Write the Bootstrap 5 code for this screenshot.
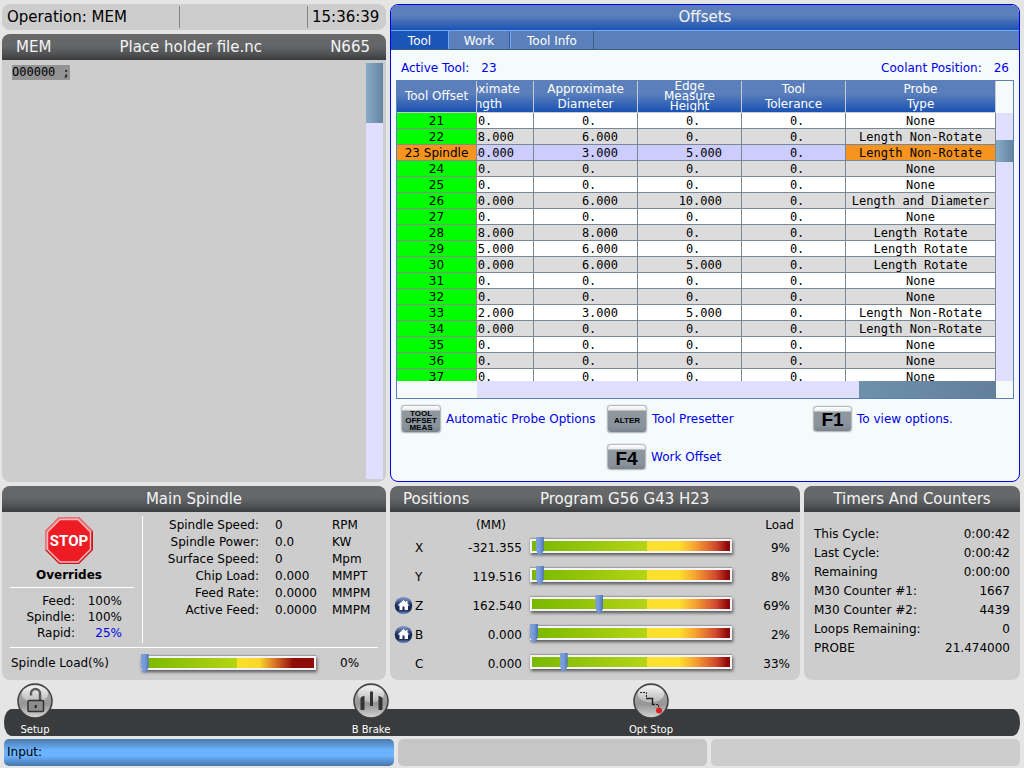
<!DOCTYPE html>
<html lang="en">
<head>
<meta charset="utf-8">
<meta name="viewport" content="width=device-width, initial-scale=1">
<title>CNC Control - Offsets</title>
<link href="https://cdn.jsdelivr.net/npm/bootstrap@5.3.0/dist/css/bootstrap.min.css" rel="stylesheet">
<style>
  body { font-family: "DejaVu Sans", sans-serif; font-size: 12px; line-height: 16px; color: #000; background: #e5e5e5; }
  .screen { height: 100vh; min-height: 700px; padding: 4px 4px 3px 2px; }
  .top-area { display: grid; grid-template-columns: 384fr 630fr; gap: 4px; min-height: 0; }
  .bottom-area { display: grid; grid-template-columns: 384fr 410fr 216fr; gap: 4px; height: 194px; margin-top: 4px; }
  .pane { background: #cdcdcd; border-radius: 8px; overflow: hidden; min-width: 0; }
  .pane-title, .blue-title, .op-bar { font-size: 15px; font-weight: 400; }
  .pane-title { height: 26px; line-height: 26px; color: #f4f4f4; margin: 0; background: linear-gradient(#66686a 0%, #646668 45%, #515355 75%, #393b3c 100%); }
  .file-title { padding: 0 16px 0 14px; }
  .op-bar { height: 26px; }
  .op-bar > div { border-right: 1px solid #858585; margin: 2px 0; line-height: 22px; }
  .op-bar > div:last-child { border: 0; }
  .op-mode { width: 178px; padding-left: 5px; }
  .op-time { width: 78px; padding-left: 4px; }
  .code-line { font-family: "DejaVu Sans Mono", monospace; background: #939393; line-height: 15px; margin: 5px 0 0 10px; height: 15px; }
  .v-track { width: 17px; margin: 3px 3px 3px 0; background: #e0dfff; }
  .v-thumb { height: 60px; background: linear-gradient(90deg, #86adc6, #6583a0); }

  .offsets { background: #f5fbfb; border: 1px solid #0000e6; border-radius: 8px; overflow: hidden; min-width: 0; }
  .blue-title { height: 26px; margin: -1px -1px 0; line-height: 26px; color: #f4f4f4; background: linear-gradient(#5b7fbb 0%, #5b7fbb 45%, #1a52b4 100%); }
  .tab-row { height: 20px; background: #5b7fbb; border-top: 1px solid #6cacff; border-bottom: 1px solid #3c5c84; }
  .tab-btn { border: 0; height: 18px; padding: 3px 0 0; line-height: 15px; color: #fff; background: #5b7fbb; border-right: 1px solid #3c5c84; border-left: 1px solid #6cacff; }
  .tab-btn.on { background: #1a55b8; border-color: #1a55b8; }
  .t1 { width: 57px; } .t2 { width: 62px; } .t3 { width: 84px; }
  .blue-text { color: #0000e8; }
  .info-row { padding: 10px 10px 0; height: 30px; }
  .grid-frame { margin: 0 5px; border: 1px solid #5b7fbb; display: grid; grid-template-columns: minmax(0, 1fr) 17px; grid-template-rows: minmax(0, 1fr) 17px; min-height: 0; }
  .table-view { overflow: auto; scrollbar-width: none; }
  .table-view::-webkit-scrollbar { display: none; }
  .offset-table { border-collapse: separate; border-spacing: 0; table-layout: fixed; min-width: 646px; width: 100%; font-family: "DejaVu Sans Mono", monospace; }
  .offset-table th, .offset-table td { padding: 1px 0 0; border-right: 1px solid #7a8794; border-bottom: 1px solid #7a8794; height: 16px; line-height: 14px; white-space: pre; }
  .offset-table thead th { position: sticky; top: 0; z-index: 2; height: 32px; padding: 0; font: 400 12px/15px "DejaVu Sans", sans-serif; color: #fff; text-align: center; vertical-align: middle; border-color: #c9cbd0; background: linear-gradient(#5b7fbb 0%, #5b7fbb 40%, #1a52b4 100%); }
  .offset-table thead th:first-child { left: 0; z-index: 3; }
  .three-line { display: block; height: 31px; line-height: 10px; overflow: hidden; }
  .offset-table tbody th { position: sticky; left: 0; z-index: 1; background: #00fe00; font: 400 12px/14px "DejaVu Sans", sans-serif; text-align: center; border-color: #8a8a8a; }
  .offset-table td { background: #fff; text-align: right; padding-right: 19px; }
  .offset-table td:last-child { text-align: center; padding-right: 0; }
  .offset-table tr:nth-child(even) td { background: #dcdcdc; }
  .offset-table tr.active-tool td { background: #ccccff; }
  .offset-table tr.active-tool th, .offset-table tr.active-tool td:last-child { background: #f79420; }
  .grid-scroll { margin-top: 32px; background: #e0dfff; }
  .grid-thumb { margin-top: 27px; height: 22px; }
  .h-track { margin-left: 80px; background: #e0dfff; }
  .h-thumb { width: 137px; background: linear-gradient(90deg, #6d90ab, #627f9b); }
  .keys { display: grid; grid-template-columns: 206px 206px 1fr; row-gap: 10px; padding: 5px 0 10px 10px; height: 82px; align-items: center; }
  .keys > div { display: flex; align-items: center; gap: 5px; }
  .key-cap { width: 40px; height: 28px; padding: 3px 0 0; font: 700 8px/7px "Liberation Sans", sans-serif; color: #000; border: 1px solid #b9bcbf; border-radius: 4px; background: linear-gradient(#fff 0, #e8eaec 4px, #8f979f 5px, #8a939c 80%, #7a828a 100%); box-shadow: 0 0 1px #555; }
  .key-cap.fkey { width: 39px; height: 26px; font-size: 19px; line-height: 18px; }

  .white-line { border: 0; border-top: 1px solid #fff; opacity: 1; margin: 0; }
  .spin-left { width: 124px; }
  .spin-left .white-line { margin: 4px 0 5px; }
  .spin-state { padding-right: 6px; }
  .data-table { border-collapse: collapse; }
  .data-table td, .data-table th { padding: 0; font-weight: 400; white-space: nowrap; }
  .ovr th, .spin th { text-align: right; }
  .ovr tr { height: 16px; }
  .spin tr { height: 17px; }
  .spin-right { border-left: 1px solid #fff; height: 127px; }
  .gauge { position: relative; height: 14px; border: 2px solid #f4f4f8; background: linear-gradient(90deg, #79b800 0%, #b5d416 58%, #fbe02e 58%, #fde02c 74%, #f8a632 82%, #d0482e 93%, #8d0505 99%); box-shadow: 0 -1px 1px #a0a0a0, 1px 2px 3px #555; }
  .gauge.load { background: linear-gradient(90deg, #79b800 0%, #b5d416 55%, #fbe02e 55%, #f8d82c 68%, #d8752a 77%, #8d0c08 88%); }
  .gauge-mark { position: absolute; top: -4px; width: 8px; height: 19px; margin-left: -4px; background: linear-gradient(90deg, #7ea2dc, #7499d6 50%, #4d72b2); clip-path: polygon(0 0, 100% 0, 100% 70%, 62% 100%, 38% 100%, 0 70%); }
  .load-row { padding: 7px 8px 0 9px; }
  .pos-table { width: 100%; table-layout: fixed; }
  .pos-table tr { height: 29px; }
  .pos-table .gauge { margin-bottom: 3px; }
  .pos-table thead tr { height: 21px; vertical-align: bottom; }
  .pos-table td:nth-child(3), .pos-table th:nth-child(3) { text-align: right; }
  .timers tr { height: 19px; }
  .timer-body { padding: 12px 10px 0; }

  .dock { height: 53px; margin-top: 3px; position: relative; }
  .dock-bar { height: 27px; margin: 0 0 0 2px; background: #3a3b3d; border-radius: 8px / 13px; }
  .dock-items { position: absolute; left: 0; right: 0; top: 0; display: grid; grid-template-columns: 336fr 280fr 402fr; }
  .dock-btn { border: 0; background: none; padding: 0; color: #fff; font-size: 10px; line-height: 14px; width: 66px; }
  .dock-btn svg { display: block; margin: 0 auto 4px; }
  .entry-row { display: grid; grid-template-columns: 390fr 309fr 309fr; gap: 4px; margin: 3px 0 0 2px; height: 26px; }
  .entry { border-radius: 5px; background: linear-gradient(#4a78ab 0%, #6cb3ff 42%, #6cb3ff 62%, #4775a8 100%); padding: 0 3px; line-height: 27px; }
  .entry input { border: 0; background: none; outline: 0; min-width: 0; padding: 0 4px; }
  .msg { border-radius: 5px; background: #cdcdcd; }
  .msg.hint { background: #c6c6c6; }
</style>
</head>
<body>
<div class="screen d-flex flex-column">
  <main class="top-area flex-grow-1">
    <div class="d-flex flex-column gap-1">
      <header class="pane op-bar d-flex flex-shrink-0">
        <div class="op-mode">Operation: MEM</div><div class="flex-grow-1"></div><div class="op-time">15:36:39</div>
      </header>
      <section class="pane d-flex flex-column flex-grow-1">
        <h2 class="pane-title file-title d-flex justify-content-between"><span>MEM</span><span>Place holder file.nc</span><span>N665</span></h2>
        <div class="d-flex flex-grow-1 justify-content-between">
          <div class="code-line">O00000 ;</div>
          <div class="v-track"><div class="v-thumb"></div></div>
        </div>
      </section>
    </div>

    <section class="offsets d-flex flex-column">
      <h2 class="blue-title text-center flex-shrink-0">Offsets</h2>
      <nav class="tab-row d-flex flex-shrink-0">
        <button class="tab-btn t1 on" type="button">Tool</button><button class="tab-btn t2" type="button">Work</button><button class="tab-btn t3" type="button">Tool Info</button>
      </nav>
      <div class="info-row blue-text d-flex justify-content-between flex-shrink-0">
        <span>Active Tool:<span class="ps-2 ms-1">23</span></span><span>Coolant Position:<span class="ps-2 ms-1">26</span></span>
      </div>
      <div class="grid-frame flex-grow-1">
        <div class="table-view" id="tableView">
          <table class="offset-table">
            <colgroup><col style="width:80px"><col style="width:104px"><col style="width:104px"><col style="width:104px"><col style="width:104px"><col style="width:150px"></colgroup>
            <thead><tr><th>Tool Offset</th><th>Approximate<br>Length</th><th>Approximate<br>Diameter</th><th><span class="three-line">Edge<br>Measure<br>Height</span></th><th>Tool<br>Tolerance</th><th>Probe<br>Type</th></tr></thead>
            <tbody>
              <tr><th>21</th><td>0.   </td><td>0.   </td><td>0.   </td><td>0.   </td><td>None</td></tr>
              <tr><th>22</th><td>28.000</td><td>6.000</td><td>0.   </td><td>0.   </td><td>Length Non-Rotate</td></tr>
              <tr class="active-tool"><th>23 Spindle</th><td>40.000</td><td>3.000</td><td>5.000</td><td>0.   </td><td>Length Non-Rotate</td></tr>
              <tr><th>24</th><td>0.   </td><td>0.   </td><td>0.   </td><td>0.   </td><td>None</td></tr>
              <tr><th>25</th><td>0.   </td><td>0.   </td><td>0.   </td><td>0.   </td><td>None</td></tr>
              <tr><th>26</th><td>60.000</td><td>6.000</td><td>10.000</td><td>0.   </td><td>Length and Diameter</td></tr>
              <tr><th>27</th><td>0.   </td><td>0.   </td><td>0.   </td><td>0.   </td><td>None</td></tr>
              <tr><th>28</th><td>28.000</td><td>8.000</td><td>0.   </td><td>0.   </td><td>Length Rotate</td></tr>
              <tr><th>29</th><td>25.000</td><td>6.000</td><td>0.   </td><td>0.   </td><td>Length Rotate</td></tr>
              <tr><th>30</th><td>20.000</td><td>6.000</td><td>5.000</td><td>0.   </td><td>Length Rotate</td></tr>
              <tr><th>31</th><td>0.   </td><td>0.   </td><td>0.   </td><td>0.   </td><td>None</td></tr>
              <tr><th>32</th><td>0.   </td><td>0.   </td><td>0.   </td><td>0.   </td><td>None</td></tr>
              <tr><th>33</th><td>22.000</td><td>3.000</td><td>5.000</td><td>0.   </td><td>Length Non-Rotate</td></tr>
              <tr><th>34</th><td>80.000</td><td>0.   </td><td>0.   </td><td>0.   </td><td>Length Non-Rotate</td></tr>
              <tr><th>35</th><td>0.   </td><td>0.   </td><td>0.   </td><td>0.   </td><td>None</td></tr>
              <tr><th>36</th><td>0.   </td><td>0.   </td><td>0.   </td><td>0.   </td><td>None</td></tr>
              <tr><th>37</th><td>0.   </td><td>0.   </td><td>0.   </td><td>0.   </td><td>None</td></tr>
            </tbody>
          </table>
        </div>
        <div class="grid-scroll d-flex flex-column"><div class="v-thumb grid-thumb"></div></div>
        <div class="h-track d-flex justify-content-end"><div class="h-thumb"></div></div>
      </div>
      <div class="keys blue-text flex-shrink-0">
        <div><button class="key-cap" id="k1" type="button">TOOL<br>OFFSET<br>MEAS</button><label for="k1" class="text-nowrap">Automatic Probe Options</label></div>
        <div><button class="key-cap" id="k2" type="button">ALTER</button><label for="k2">Tool Presetter</label></div>
        <div><button class="key-cap fkey" id="k3" type="button">F1</button><label for="k3">To view options.</label></div>
        <div></div>
        <div><button class="key-cap fkey" id="k4" type="button">F4</button><label for="k4">Work Offset</label></div>
      </div>
    </section>
  </main>

  <div class="bottom-area flex-shrink-0">
    <section class="pane">
      <h2 class="pane-title text-center">Main Spindle</h2>
      <div class="d-flex px-2 pt-1">
        <div class="spin-left d-flex flex-column">
          <div class="spin-state d-flex flex-column align-items-center">
            <svg width="50" height="51" viewBox="0 0 50 51" role="img" aria-label="Stop">
              <polygon points="15,1 35,1 49,15 49,34 35,48 15,48 1,34 1,15" fill="#c8151d"/>
              <polygon points="15,1 35,1 49,15 47,16 34,3 16,3 3,16 3,34 1,34 1,15" fill="#e8747a"/>
              <polygon points="16,3.500 34,3.500 46.500,16 46.500,33.500 34,46 16,46 3.500,33.500 3.500,16" fill="#ed1c24" stroke="#fbb9bc" stroke-width="1.500"/>
              <text x="25" y="30" text-anchor="middle" font-family="Roboto, sans-serif" font-weight="700" font-size="15" fill="#fff">STOP</text>
            </svg>
            <b>Overrides</b>
          </div>
          <hr class="white-line">
          <table class="data-table ovr" style="width:112px"><tbody>
            <tr><th style="width:65px">Feed:</th><td class="text-end">100%</td></tr>
            <tr><th>Spindle:</th><td class="text-end">100%</td></tr>
            <tr><th>Rapid:</th><td class="text-end blue-text">25%</td></tr>
          </tbody></table>
        </div>
        <div class="spin-right ms-2">
          <table class="data-table spin"><tbody>
            <tr><th style="width:116px">Spindle Speed:</th><td class="ps-3" style="width:73px">0</td><td>RPM</td></tr>
            <tr><th>Spindle Power:</th><td class="ps-3">0.0</td><td>KW</td></tr>
            <tr><th>Surface Speed:</th><td class="ps-3">0</td><td>Mpm</td></tr>
            <tr><th>Chip Load:</th><td class="ps-3">0.000</td><td>MMPT</td></tr>
            <tr><th>Feed Rate:</th><td class="ps-3">0.0000</td><td>MMPM</td></tr>
            <tr><th>Active Feed:</th><td class="ps-3">0.0000</td><td>MMPM</td></tr>
          </tbody></table>
        </div>
      </div>
      <hr class="white-line mx-2 mt-1">
      <div class="load-row d-flex align-items-center">
        <span style="width:130px">Spindle Load(%)</span>
        <div class="gauge load" style="width:175px" role="meter" aria-label="Spindle load" aria-valuenow="0"><div class="gauge-mark" style="left:1%"></div></div>
        <span class="ms-4">0%</span>
      </div>
    </section>

    <section class="pane">
      <h2 class="pane-title d-flex"><span style="width:150px;padding-left:13px">Positions</span><span>Program G56 G43 H23</span></h2>
      <table class="data-table pos-table">
        <colgroup><col style="width:25px"><col style="width:30px"><col style="width:77px"><col><col style="width:58px"><col style="width:10px"></colgroup>
        <thead><tr><th></th><th></th><th class="pe-3">(MM)</th><th></th><th class="text-end"><span class="d-block" style="margin-right:-4px">Load</span></th><th></th></tr></thead>
        <tbody id="axes"></tbody>
      </table>
    </section>

    <section class="pane">
      <h2 class="pane-title text-center">Timers And Counters</h2>
      <div class="timer-body"><table class="data-table timers w-100"><tbody>
        <tr><th>This Cycle:</th><td class="text-end">0:00:42</td></tr>
        <tr><th>Last Cycle:</th><td class="text-end">0:00:42</td></tr>
        <tr><th>Remaining</th><td class="text-end">0:00:00</td></tr>
        <tr><th>M30 Counter #1:</th><td class="text-end">1667</td></tr>
        <tr><th>M30 Counter #2:</th><td class="text-end">4439</td></tr>
        <tr><th>Loops Remaining:</th><td class="text-end">0</td></tr>
        <tr><th>PROBE</th><td class="text-end">21.474000</td></tr>
      </tbody></table></div>
    </section>
  </div>

  <svg width="0" height="0" class="position-absolute" aria-hidden="true"><defs>
    <linearGradient id="disc" x1="0" y1="0" x2="0" y2="1"><stop offset="0" stop-color="#b5b5b5"/><stop offset=".6" stop-color="#969696"/><stop offset="1" stop-color="#d5d5d5"/></linearGradient>
    <linearGradient id="gloss" x1="0" y1="0" x2="0" y2="1"><stop offset="0" stop-color="#fff"/><stop offset="1" stop-color="#bcbcbc"/></linearGradient>
    <linearGradient id="navy" x1="0" y1="0" x2="0" y2="1"><stop offset="0" stop-color="#8fa6d8"/><stop offset=".45" stop-color="#1f3264"/><stop offset=".75" stop-color="#16244e"/><stop offset="1" stop-color="#7e9ad6"/></linearGradient>
    <g id="knob"><circle cx="18" cy="18" r="17" fill="url(#disc)" stroke="#3f3f3f" stroke-width="1.500"/><ellipse cx="18" cy="11" rx="13" ry="8.500" fill="url(#gloss)" opacity=".85"/></g>
  </defs></svg>

  <footer class="dock flex-shrink-0 d-flex flex-column justify-content-end">
    <div class="dock-bar"></div>
    <div class="dock-items">
      <button class="dock-btn" type="button"><svg width="36" height="36" viewBox="0 0 36 36"><use href="#knob"/><path d="M14 12.500v-2a4.500 4.500 0 0 1 9 0V17" fill="none" stroke="#5a5a5a" stroke-width="2.500"/><rect x="11" y="17.500" width="15.500" height="11" rx="1" fill="#8c8c8c" stroke="#333" stroke-width="1.500"/><path d="M18.700 22v3" stroke="#222" stroke-width="2"/></svg>Setup</button>
      <button class="dock-btn" type="button"><svg width="36" height="36" viewBox="0 0 36 36"><use href="#knob"/><path d="M7.500 15q1-2 4-2v14h-4zM17 8.500h3v14.500H17zM25.500 13q2 0 4 2v12h-4z" fill="#333"/></svg>B Brake</button>
      <button class="dock-btn" type="button"><svg width="36" height="36" viewBox="0 0 36 36"><use href="#knob"/><path d="M7 9.500h6.500v6M20 21.500h5.500v4" fill="none" stroke="#222" stroke-dasharray="2 1"/><path d="M13 15.500h6.500v6h2" fill="none" stroke="#222" stroke-width="1.500"/><circle cx="26" cy="27.500" r="3" fill="#d8201e"/></svg>Opt Stop</button>
    </div>
  </footer>
  <div class="entry-row flex-shrink-0">
    <div class="entry d-flex"><label for="cmd">Input:</label><input id="cmd" type="text" class="flex-grow-1"></div>
    <div class="msg hint"></div><div class="msg"></div>
  </div>
</div>
<script src="https://cdn.jsdelivr.net/npm/bootstrap@5.3.0/dist/js/bootstrap.bundle.min.js"></script>
<script>
  // Axis rows: name, position, marker place on the gauge (%), load, homed flag
  const home = '<svg class="d-block ms-1" width="19" height="19" viewBox="0 0 19 19"><circle cx="9.5" cy="9.5" r="8.800" fill="url(#navy)"/><path d="M9.500 4L3.500 9.500h2V14h3v-3.500h2V14h3.500V9.500h1.500L13.500 7.500V5h-1.500v1.300z" fill="#fff"/></svg>';
  const axes = [['X', '-321.355', 4, 9, 0], ['Y', '119.516', 4, 8, 0], ['Z', '162.540', 34, 69, 1], ['B', '0.000', 1, 2, 1], ['C', '0.000', 16, 33, 0]];
  document.getElementById('axes').innerHTML = axes.map(([n, p, m, l, h]) =>
    `<tr><td>${h ? home : ''}</td><td>${n}</td><td>${p}</td><td class="ps-2"><div class="gauge" role="meter" aria-label="${n} load" aria-valuenow="${l}"><div class="gauge-mark" style="left:${m}%"></div></div></td><td class="text-end">${l}%</td><td></td></tr>`).join('');
  // The offset table opens scrolled to its last column
  document.getElementById('tableView').scrollLeft = 9999;
</script>
</body>
</html>
